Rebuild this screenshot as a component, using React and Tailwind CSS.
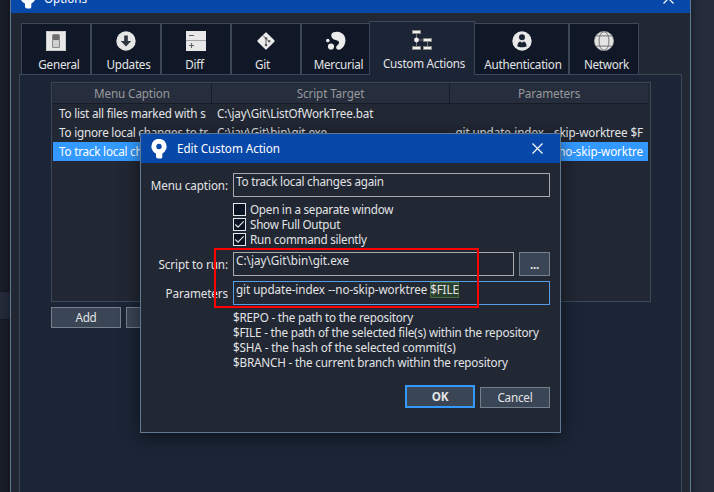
import React from "react";

const GitLogo = () => (
  <svg width="20" height="20" viewBox="0 0 20 20">
    <rect x="3.6" y="3.6" width="12.8" height="12.8" rx="1" transform="rotate(45 10 10)" fill="#ececec" />
    <path d="M7 4.5 10 7.5V14M10 7.5 13 10.5" stroke="#5b5b5b" strokeWidth="1" fill="none" />
    <circle cx="10" cy="7.3" r="1.2" fill="#5b5b5b" />
    <circle cx="10" cy="14" r="1.3" fill="#5b5b5b" />
    <circle cx="13.2" cy="10.3" r="1.2" fill="#5b5b5b" />
  </svg>
);

const icons = {
  General: (
    <svg width="20" height="20" viewBox="0 0 20 20">
      <rect x="0.5" y="0.5" width="19" height="19" fill="#e8e8e8" stroke="#c9c9c9" />
      <rect x="6" y="3" width="8" height="14" rx="1.5" fill="#8a8a8a" />
      <rect x="7" y="4" width="6" height="5" fill="#6c6c6c" />
      <rect x="7" y="9" width="6" height="7" rx="1" fill="#cfcfcf" />
    </svg>
  ),
  Updates: (
    <svg width="20" height="20" viewBox="0 0 20 20">
      <circle cx="10" cy="10" r="9.7" fill="#e6e6e6" />
      <path d="M8.2 4.500h3.600v5.500h3.400L10 15.500 4.800 10h3.400z" fill="#2e3440" />
    </svg>
  ),
  Diff: (
    <svg width="20" height="20" viewBox="0 0 20 20">
      <rect width="20" height="20" fill="#e8e8e8" />
      <path d="M0 9.5h20" stroke="#a5a5a5" strokeWidth="1" />
      <path d="M3 4.5h5M3 14.5h5M5.5 12v5" stroke="#636363" strokeWidth="1.1" />
    </svg>
  ),
  Git: <GitLogo />,
  Mercurial: (
    <svg width="20" height="20" viewBox="0 0 20 20">
      <path d="M7 1.6C11 -0.4 16.5 0.8 18.6 5.2 20.8 10.4 18.4 17.2 13.6 18.7 11.4 19.3 9.8 17.8 10.2 16 10.7 13.7 13.4 13.4 13 11.2 12.6 9.4 10.2 9.6 8 8.6 5 7.4 4.2 3.2 7 1.6z" fill="#ececec" />
      <circle cx="5" cy="15.5" r="3.1" fill="#ececec" />
      <circle cx="1.8" cy="9.6" r="1.8" fill="#ececec" />
    </svg>
  ),
  "Custom Actions": (
    <svg width="20" height="20" viewBox="0 0 20 20">
      <path d="M4.5 3v14M4.5 10H17M15.5 10v7" stroke="#777" strokeWidth="1" fill="none" />
      <g fill="#f0f0f0" stroke="#8a8a83" strokeWidth="1">
        <rect x="0.5" y="0.5" width="8" height="3" />
        <rect x="0.5" y="16.5" width="8" height="3" />
        <rect x="11.5" y="8.5" width="8" height="3" />
        <rect x="11.5" y="16.5" width="8" height="3" />
      </g>
      <circle cx="4.5" cy="10" r="2.4" fill="#f0f0f0" />
    </svg>
  ),
  Authentication: (
    <svg width="20" height="20" viewBox="0 0 20 20">
      <circle cx="10" cy="10" r="9.7" fill="#e9e9e9" />
      <circle cx="10" cy="6.3" r="3" fill="#1b2432" />
      <path d="M5.4 15.5c0-3.4 1.6-5 3-5l1.6 1.2 1.6-1.2c1.4 0 3 1.6 3 5-1.6 1-7.6 1-9.200 0z" fill="#1b2432" />
    </svg>
  ),
  Network: (
    <svg width="20" height="20" viewBox="0 0 20 20">
      <circle cx="10" cy="10" r="9.5" fill="#e4e4e4" stroke="#bdbdbd" strokeWidth="0.8" />
      <g fill="none" stroke="#727272" strokeWidth="1">
        <ellipse cx="10" cy="10" rx="5" ry="9.3" />
        <path d="M2.200 4.900h15.600M2.200 15.100h15.600" />
      </g>
    </svg>
  ),
};

const tabs = [
  { name: "General", box: "w-[70px]", label: "pl-[6px]" },
  { name: "Updates", box: "w-[70px]", label: "pl-[5px]" },
  { name: "Diff", box: "w-[70px]", label: "pr-[3px]" },
  { name: "Git", box: "w-[70px]", label: "pr-[7px]" },
  { name: "Mercurial", box: "w-[68px] border-r-0", label: "pl-[6px]" },
  { name: "Custom Actions", box: "w-[106px]", label: "pl-[4px]", active: true },
  { name: "Authentication", box: "w-[94px] border-l-0", label: "pl-[3px]" },
  { name: "Network", box: "w-[70px]", label: "pl-[5px]" },
];

const rows = [
  ["To list all files marked with s", "C:\\jay\\Git\\ListOfWorkTree.bat", ""],
  ["To ignore local changes to tr", "C:\\jay\\Git\\bin\\git.exe", "git update-index --skip-worktree $F"],
  ["To track local changes", "", "no-skip-worktre"],
];

const help = [
  { text: "$REPO - the path to the repository", fit: "tracking-[-0.21px]" },
  { text: "$FILE - the path of the selected file(s) within the repository", fit: "tracking-[-0.2px]" },
  { text: "$SHA - the hash of the selected commit(s)", fit: "tracking-[-0.12px]" },
  { text: "$BRANCH - the current branch within the repository", fit: "tracking-[-0.17px]" },
];

const TitleBar = ({ title, className, titleGap, closeGap }) => (
  <div className={`flex h-[29px] shrink-0 items-center bg-[#0748a8] text-white ${className}`}>
    <svg width="17" height="20" viewBox="0 0 17 20" className="shrink-0">
      <path d="M5 11.500h6.300v6.500a1.500 1.500 0 0 1-1.500 1.500H7a2 2 0 0 1-2-2z" fill="#fff" />
      <circle cx="8" cy="7.500" r="5.200" fill="none" stroke="#fff" strokeWidth="5" />
    </svg>
    <span className={`tracking-[-0.05px] ${titleGap}`}>{title}</span>
    <svg width="11" height="11" viewBox="0 0 11 11" className={`ml-auto ${closeGap}`}>
      <path d="M0.5 0.5l10 10M10.500 0.500l-10 10" stroke="#fff" strokeWidth="1.200" />
    </svg>
  </div>
);

const Button = ({ children, className, frame = "border border-[#76808c]" }) => (
  <div className={`flex shrink-0 items-center justify-center bg-[#3a4555] ${frame} ${className}`}>{children}</div>
);

const Check = ({ label, on }) => (
  <div className="flex h-[15px] items-center">
    <div className="size-[13px] border border-[#e4e7ea] bg-[#0b1422]">
      {on && (
        <svg width="11" height="11" viewBox="0 0 11 11">
          <path d="M1.300 5.500 4 8.200 9.700 2.300" stroke="#e4e7ea" strokeWidth="1.100" fill="none" />
        </svg>
      )}
    </div>
    <span className="pl-1">{label}</span>
  </div>
);

const Field = ({ label, children, className = "" }) => (
  <div className={`flex h-[24px] ${className}`}>
    <div className="flex w-[87px] items-center justify-end tracking-[-0.1px]">{label}</div>
    <div className="ml-[5px] flex flex-1">{children}</div>
  </div>
);

const Dialog = () => (
  <div className="absolute left-[140px] top-[133px] flex h-[300px] w-[421px] flex-col border border-[#5d7890] bg-[#212733] shadow-[0_4px_16px_rgba(0,0,0,0.5)]">
    <TitleBar title="Edit Custom Action" className="pl-[10px]" titleGap="pl-[9px]" closeGap="mr-[17px]" />
    <div className="flex flex-col pr-[10px] pt-[10px]">
      <Field label="Menu caption:">
        <div className="flex-1 border border-[#a7a9ad] pl-[2px]">To track local changes again</div>
      </Field>
      <div className="ml-[92px] mt-[5px] tracking-[-0.25px]">
        <Check label="Open in a separate window" />
        <Check label="Show Full Output" on />
        <Check label="Run command silently" on />
      </div>
      <Field label="Script to run:" className="mt-[5px]">
        <div className="flex-1 border border-[#a7a9ad] pl-[2px] tracking-[0.01px]">C:\jay\Git\bin\git.exe</div>
        <Button className="ml-[5px] w-[31px]">
          <b>...</b>
        </Button>
      </Field>
      <Field label="Parameters" className="mt-[5px]">
        <div className="flex flex-1 whitespace-pre border border-[#569de5] pl-[2px] tracking-[-0.07px]">
          git update-index --no-skip-worktree{" "}
          <span className="h-[16px] bg-[#2b4030] tracking-[-0.15px] shadow-[inset_0_0_0_1px_#486b3c]">$FILE</span>
        </div>
      </Field>
      <div className="ml-[92px] mt-[5px] whitespace-nowrap">
        {help.map((h) => (
          <div key={h.text} className={h.fit}>
            {h.text}
          </div>
        ))}
      </div>
      <div className="mt-[15px] flex items-end justify-end gap-[5px]">
        <Button className="h-[23px] w-[70px]" frame="border-2 border-[#3399ff]">
          <b>OK</b>
        </Button>
        <Button className="h-[21px] w-[70px]">Cancel</Button>
      </div>
    </div>
  </div>
);

export default function App() {
  return (
    <div className="relative flex h-[492px] w-[714px] overflow-hidden bg-[#252d3d] font-['Noto_Sans','Open_Sans',sans-serif] text-[11.68px] leading-[15px] tracking-[-0.21px] text-[#e2e4e6]">
      <div className="flex w-[10px] flex-col bg-[#1a1e29]">
        <div className="mt-auto mb-[172px] h-[29px] border-y border-[#151922] bg-[#252c3b]" />
      </div>
      <div className="-mt-[17px] flex h-[520px] w-[681px] shrink-0 flex-col border border-[#5d7890] bg-[#212733] shadow-[0_0_12px_rgba(0,0,0,0.45)]">
        <TitleBar title="Options" className="pl-[9px]" titleGap="pl-[7px]" closeGap="mr-[16px]" />
        <div className="mt-[8px] flex h-[54px] items-end pl-[10px]">
          {tabs.map((t) => (
            <div
              key={t.name}
              className={`flex shrink-0 flex-col items-center border border-[#3c475a] tracking-[-0.25px] ${t.box} ${
                t.active ? "z-10 h-[54px] border-b-[#1b2536] bg-[#1b2536] pt-[8px]" : "h-[52px] bg-[#101827] pt-[7px]"
              }`}
            >
              {icons[t.name]}
              <div className={`whitespace-nowrap pt-[6px] ${t.label}`}>{t.name}</div>
            </div>
          ))}
        </div>
        <div className="-mt-px ml-[8px] flex w-[663px] flex-1 flex-col border border-b-0 border-[#3c475a] bg-[#1b2536] pl-[31px] pt-[7px]">
          <div className="flex h-[220px] w-[600px] shrink-0 flex-col border border-[#3c475a] bg-[#212733] py-px pl-px pr-[2px]">
            <div className="flex h-[20px] shrink-0 border-b border-[#161b26] bg-[#262e3d] text-center tracking-[-0.12px] text-[#98999c]">
              <div className="w-[159px] border-r border-[#161b26] pt-[2px]">Menu Caption</div>
              <div className="w-[238px] border-r border-[#161b26] pt-[2px]">Script Target</div>
              <div className="flex-1 pt-[2px]">Parameters</div>
            </div>
            {rows.map((r, i) => (
              <div key={i} className={`flex h-[19px] shrink-0 items-center whitespace-nowrap ${i === 2 ? "bg-[#3399ff] text-white" : ""}`}>
                <div className="w-[158px] overflow-hidden pl-[6px]">{r[0]}</div>
                <div className="w-[239px] pl-[6px] tracking-[-0.14px]">{r[1]}</div>
                <div className="flex-1 overflow-hidden pr-[5px] text-right tracking-[-0.11px]">{r[2]}</div>
              </div>
            ))}
          </div>
          <div className="mt-[5px] flex gap-[5px]">
            <Button className="h-[21px] w-[70px]">Add</Button>
            <Button className="h-[21px] w-[70px]" />
          </div>
        </div>
      </div>
      <Dialog />
      <div className="absolute left-[214px] top-[248px] h-[60px] w-[265px] border-2 border-[#ff0000]" />
    </div>
  );
}
